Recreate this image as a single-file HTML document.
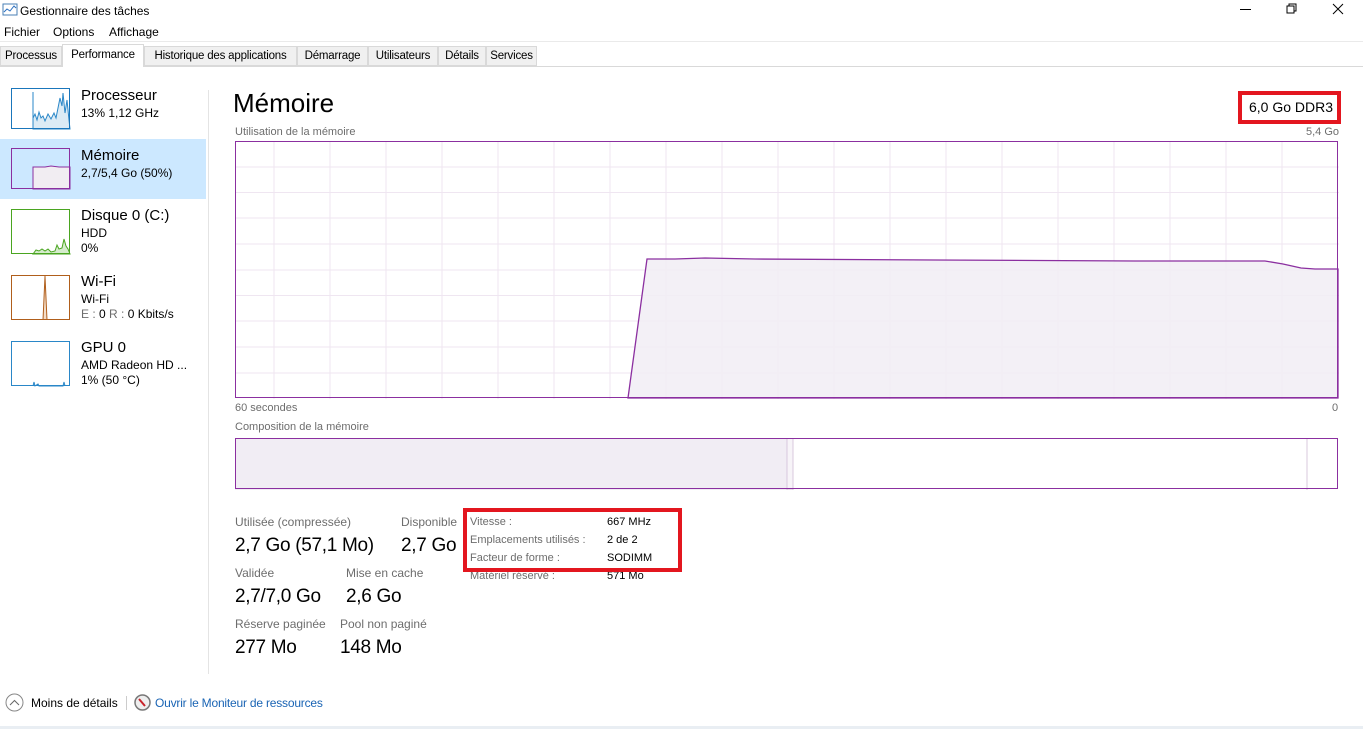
<!DOCTYPE html>
<html><head><meta charset="utf-8"><style>
*{margin:0;padding:0;box-sizing:border-box}
body{width:1363px;height:729px;background:#fff;font-family:"Liberation Sans",sans-serif;color:#000;position:relative;overflow:hidden;font-size:12px}
.a{position:absolute;white-space:nowrap}
.g{color:#6d6d6d}
.tab{position:absolute;top:46px;height:20px;border:1px solid #d9d9d9;background:#f0f0f0;font-size:11.5px;letter-spacing:-0.2px;padding:3px 0 0 0;white-space:nowrap;overflow:hidden;text-align:center}
</style></head><body>
<svg class="a" style="left:2px;top:3px" width="16" height="14"><rect x="1" y="1" width="14" height="11" fill="#fff" stroke="#4a7fb5"/><polyline points="2,9 5,6 8,8 12,3 14,5" fill="none" stroke="#2a6fc0"/></svg>
<div class="a" style="left:20px;top:4px;font-size:12px">Gestionnaire des tâches</div>
<div class="a" style="left:1240px;top:9px;width:11px;height:1px;background:#000"></div>
<svg class="a" style="left:1286px;top:3px" width="12" height="12"><rect x="1" y="3" width="7" height="7" fill="none" stroke="#000"/><path d="M3 3V1h7v7H8" fill="none" stroke="#000"/></svg>
<svg class="a" style="left:1332px;top:3px" width="12" height="12"><path d="M1 1L11 11M11 1L1 11" stroke="#000"/></svg>
<div class="a" style="left:4px;top:25px">Fichier</div>
<div class="a" style="left:53px;top:25px">Options</div>
<div class="a" style="left:109px;top:25px">Affichage</div>
<div class="a" style="left:0;top:41px;width:1363px;height:1px;background:#eaeaea"></div>
<div class="a" style="left:0;top:66px;width:1363px;height:1px;background:#d9d9d9"></div>
<div class="tab" style="left:0;width:62px">Processus</div>
<div class="tab" style="left:62px;top:44px;height:23px;width:82px;background:#fff;border-bottom:none;padding-top:4px">Performance</div>
<div class="tab" style="left:144px;width:153px">Historique des applications</div>
<div class="tab" style="left:297px;width:71px">Démarrage</div>
<div class="tab" style="left:368px;width:70px">Utilisateurs</div>
<div class="tab" style="left:438px;width:48px">Détails</div>
<div class="tab" style="left:486px;width:51px">Services</div>

<div class="a" style="left:208px;top:90px;width:1px;height:584px;background:#e4e4e4"></div>
<div class="a" style="left:0;top:139px;width:206px;height:60px;background:#cce8ff"></div>

<svg class="a" style="left:11px;top:88px" width="60" height="42"><path d="M22 41V4 M22 41V30 L24 26 26 32 28 24 30 30 32 28 34 33 37 26 40 31 43 25 45 30 47 20 49 10 51 18 52 5 54 25 56 12 58 32 59 41Z" fill="#dcebf5" stroke="#2a87c8"/><rect x="0.5" y="0.5" width="58" height="40" fill="none" stroke="#1a76bb"/></svg>
<div class="a" style="left:81px;top:87px;font-size:15px">Processeur</div>
<div class="a" style="left:81px;top:106px">13% 1,12 GHz</div>

<svg class="a" style="left:11px;top:148px" width="60" height="42"><path d="M22 41V19H34L40 18 48 19 59 19V41Z" fill="#f1edf2" stroke="#8b2fa0"/><rect x="0.5" y="0.5" width="58" height="40" fill="none" stroke="#8b2fa0"/></svg>
<div class="a" style="left:81px;top:147px;font-size:15px">Mémoire</div>
<div class="a" style="left:81px;top:166px">2,7/5,4 Go (50%)</div>

<svg class="a" style="left:11px;top:209px" width="60" height="46"><path d="M22 45L25 41 28 42 31 40 34 42 37 40 40 43 44 42 46 36 48 40 51 39 53 30 55 37 57 40 59 45Z" fill="#d6eccd" stroke="#4aa520"/><rect x="0.5" y="0.5" width="58" height="44" fill="none" stroke="#4aa520"/></svg>
<div class="a" style="left:81px;top:207px;font-size:15px">Disque 0 (C:)</div>
<div class="a" style="left:81px;top:226px">HDD</div>
<div class="a" style="left:81px;top:241px">0%</div>

<svg class="a" style="left:11px;top:275px" width="60" height="46"><path d="M32 45L34 1 36 45" fill="#f3dcc7" stroke="#b05e1b"/><rect x="0.5" y="0.5" width="58" height="44" fill="none" stroke="#b05e1b"/></svg>
<div class="a" style="left:81px;top:273px;font-size:15px">Wi-Fi</div>
<div class="a" style="left:81px;top:292px">Wi-Fi</div>
<div class="a" style="left:81px;top:307px"><span class="g">E :</span> 0 <span class="g">R :</span> 0 Kbits/s</div>

<svg class="a" style="left:11px;top:341px" width="60" height="46"><path d="M22 45L23 41 24 45 27 43 28 45 52 45 53 41 54 45" fill="#d0e7f4" stroke="#2a87c8"/><rect x="0.5" y="0.5" width="58" height="44" fill="none" stroke="#2a87c8"/></svg>
<div class="a" style="left:81px;top:339px;font-size:15px">GPU 0</div>
<div class="a" style="left:81px;top:358px">AMD Radeon HD ...</div>
<div class="a" style="left:81px;top:373px">1% (50 °C)</div>

<div class="a" style="left:233px;top:88px;font-size:26px">Mémoire</div>
<div class="a" style="left:1238px;top:91px;width:103px;height:33px;border:4px solid #e3161f"></div>
<div class="a" style="left:1249px;top:99px;font-size:14px">6,0 Go DDR3</div>
<div class="a g" style="left:235px;top:126px;font-size:11px">Utilisation de la mémoire</div>
<div class="a g" style="left:1306px;top:126px;font-size:11px">5,4 Go</div>

<svg class="a" style="left:235px;top:141px" width="1104" height="258">
<g stroke="#efe6f1" stroke-width="1">
<path d="M39 0V258M95 0V258M151 0V258M207 0V258M263 0V258M319 0V258M375 0V258M431 0V258M487 0V258M543 0V258M599 0V258M655 0V258M711 0V258M767 0V258M823 0V258M879 0V258M935 0V258M991 0V258M1047 0V258"/>
<path d="M0 26H1104M0 51.5H1104M0 77H1104M0 103H1104M0 129H1104M0 154.5H1104M0 180H1104M0 206H1104M0 232H1104"/>
</g>
<path d="M393 257L412 118 440 118 470 117 520 118 700 119 900 120 1030 120 1048 123 1066 127 1080 128 1103 128V257Z" fill="#f1edf4" fill-opacity=".85" stroke="#8b2fa0" stroke-width="1.3"/>
<rect x="0.5" y="0.5" width="1102" height="256" fill="none" stroke="#8b2fa0"/>
</svg>
<div class="a g" style="left:235px;top:402px;font-size:11px">60 secondes</div>
<div class="a g" style="left:1332px;top:402px;font-size:11px">0</div>
<div class="a g" style="left:235px;top:421px;font-size:11px">Composition de la mémoire</div>
<svg class="a" style="left:235px;top:438px" width="1104" height="52"><rect x="0" y="0" width="552" height="52" fill="#f1edf4"/><rect x="552" y="0" width="6" height="52" fill="#f7f4f8" stroke="#d8c8de"/><path d="M1072 0V52" stroke="#d8c8de"/><rect x="0.5" y="0.5" width="1102" height="50" fill="none" stroke="#8b2fa0"/></svg>

<div class="a g" style="left:235px;top:515px;font-size:12px">Utilisée (compressée)</div>
<div class="a g" style="left:401px;top:515px;font-size:12px">Disponible</div>
<div class="a" style="left:235px;top:535px;font-size:19px;letter-spacing:-0.3px">2,7 Go (57,1 Mo)</div>
<div class="a" style="left:401px;top:535px;font-size:19px;letter-spacing:-0.3px">2,7 Go</div>
<div class="a g" style="left:235px;top:566px">Validée</div>
<div class="a g" style="left:346px;top:566px">Mise en cache</div>
<div class="a" style="left:235px;top:586px;font-size:19px;letter-spacing:-0.3px">2,7/7,0 Go</div>
<div class="a" style="left:346px;top:586px;font-size:19px;letter-spacing:-0.3px">2,6 Go</div>
<div class="a g" style="left:235px;top:617px">Réserve paginée</div>
<div class="a g" style="left:340px;top:617px">Pool non paginé</div>
<div class="a" style="left:235px;top:637px;font-size:19px;letter-spacing:-0.3px">277 Mo</div>
<div class="a" style="left:340px;top:637px;font-size:19px;letter-spacing:-0.3px">148 Mo</div>

<div class="a g" style="left:470px;top:516px;font-size:11px">Vitesse :</div>
<div class="a" style="left:607px;top:516px;font-size:11px">667 MHz</div>
<div class="a g" style="left:470px;top:534px;font-size:11px">Emplacements utilisés :</div>
<div class="a" style="left:607px;top:534px;font-size:11px">2 de 2</div>
<div class="a g" style="left:470px;top:552px;font-size:11px">Facteur de forme :</div>
<div class="a" style="left:607px;top:552px;font-size:11px">SODIMM</div>
<div class="a g" style="left:470px;top:570px;font-size:11px">Matériel réservé :</div>
<div class="a" style="left:607px;top:570px;font-size:11px">571 Mo</div>
<div class="a" style="left:463px;top:508px;width:219px;height:64px;border:4px solid #e3161f"></div>

<svg class="a" style="left:5px;top:693px" width="19" height="19"><circle cx="9.5" cy="9.5" r="8.5" fill="none" stroke="#888"/><path d="M5 12L9.5 7.5 14 12" fill="none" stroke="#666"/></svg>
<div class="a" style="left:31px;top:696px">Moins de détails</div>
<div class="a" style="left:126px;top:696px;width:1px;height:14px;background:#ccc"></div>
<svg class="a" style="left:134px;top:694px" width="17" height="17"><circle cx="8.5" cy="8.5" r="7.5" fill="#eee" stroke="#777" stroke-width="1.5"/><path d="M5 5L11 12" stroke="#c8232a" stroke-width="2"/></svg>
<div class="a" style="left:155px;top:696px;color:#1a64b4;letter-spacing:-0.2px">Ouvrir le Moniteur de ressources</div>
<div class="a" style="left:0;top:726px;width:1363px;height:3px;background:#e9eef3"></div>
</body></html>
